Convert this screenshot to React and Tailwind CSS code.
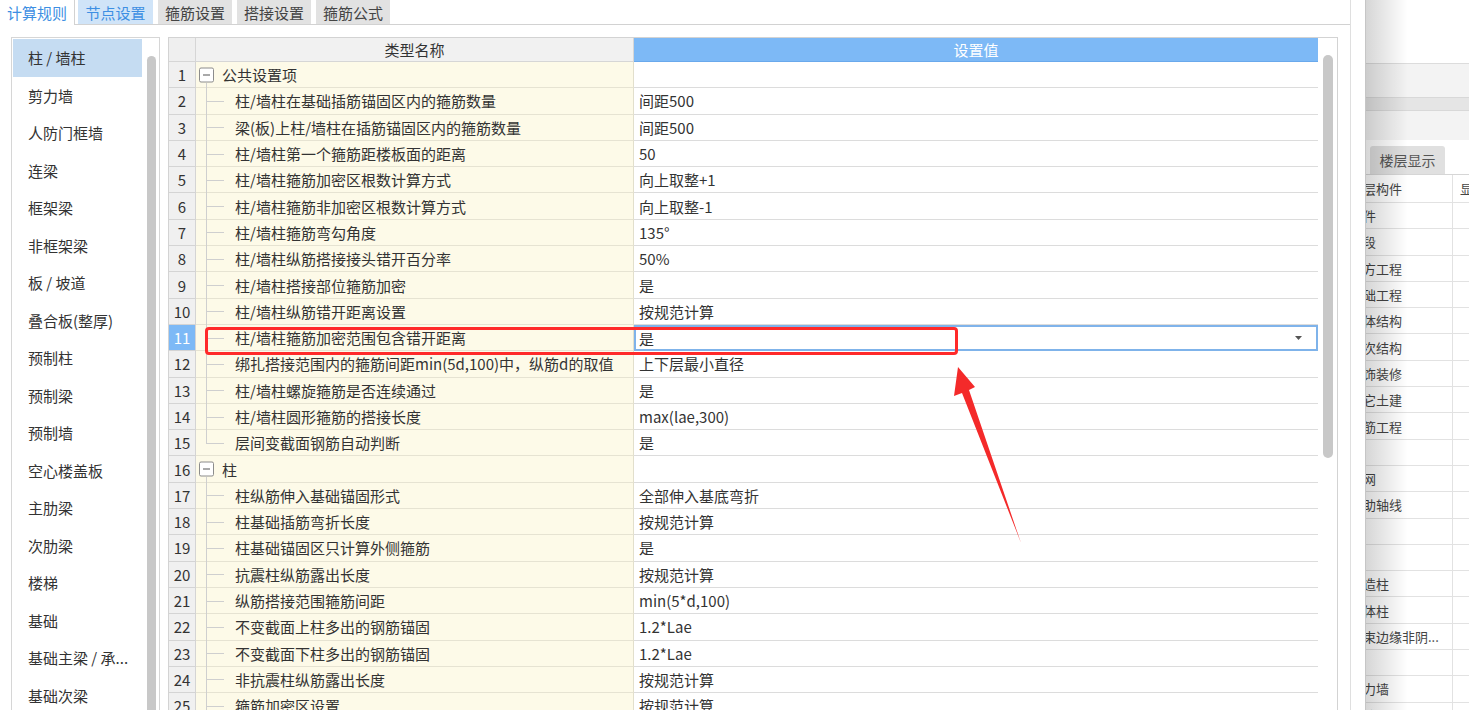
import React from "react";

const listItems = [
  "柱 / 墙柱", "剪力墙", "人防门框墙", "连梁", "框架梁", "非框架梁", "板 / 坡道", "叠合板(整厚)",
  "预制柱", "预制梁", "预制墙", "空心楼盖板", "主肋梁", "次肋梁", "楼梯", "基础", "基础主梁 / 承...", "基础次梁",
];

const rows = [
  { n: 1, name: "公共设置项", group: true, value: "" },
  { n: 2, name: "柱/墙柱在基础插筋锚固区内的箍筋数量", value: "间距500" },
  { n: 3, name: "梁(板)上柱/墙柱在插筋锚固区内的箍筋数量", value: "间距500" },
  { n: 4, name: "柱/墙柱第一个箍筋距楼板面的距离", value: "50" },
  { n: 5, name: "柱/墙柱箍筋加密区根数计算方式", value: "向上取整+1" },
  { n: 6, name: "柱/墙柱箍筋非加密区根数计算方式", value: "向上取整-1" },
  { n: 7, name: "柱/墙柱箍筋弯勾角度", value: "135°" },
  { n: 8, name: "柱/墙柱纵筋搭接接头错开百分率", value: "50%" },
  { n: 9, name: "柱/墙柱搭接部位箍筋加密", value: "是" },
  { n: 10, name: "柱/墙柱纵筋错开距离设置", value: "按规范计算" },
  { n: 11, name: "柱/墙柱箍筋加密范围包含错开距离", value: "是", selected: true },
  { n: 12, name: "绑扎搭接范围内的箍筋间距min(5d,100)中，纵筋d的取值", value: "上下层最小直径" },
  { n: 13, name: "柱/墙柱螺旋箍筋是否连续通过", value: "是" },
  { n: 14, name: "柱/墙柱圆形箍筋的搭接长度", value: "max(lae,300)" },
  { n: 15, name: "层间变截面钢筋自动判断", value: "是", last: true },
  { n: 16, name: "柱", group: true, value: "" },
  { n: 17, name: "柱纵筋伸入基础锚固形式", value: "全部伸入基底弯折" },
  { n: 18, name: "柱基础插筋弯折长度", value: "按规范计算" },
  { n: 19, name: "柱基础锚固区只计算外侧箍筋", value: "是" },
  { n: 20, name: "抗震柱纵筋露出长度", value: "按规范计算" },
  { n: 21, name: "纵筋搭接范围箍筋间距", value: "min(5*d,100)" },
  { n: 22, name: "不变截面上柱多出的钢筋锚固", value: "1.2*Lae" },
  { n: 23, name: "不变截面下柱多出的钢筋锚固", value: "1.2*Lae" },
  { n: 24, name: "非抗震柱纵筋露出长度", value: "按规范计算" },
  { n: 25, name: "箍筋加密区设置", value: "按规范计算" },
];

const rightRows = [
  "构件", "分段", "土方工程", "基础工程", "主体结构", "二次结构", "装饰装修", "其它土建", "钢筋工程", "",
  "轴网", "辅助轴线", "", "", "构造柱", "砌体柱", "约束边缘非阴...", "", "剪力墙", "人防门框墙",
];

function NameCell({ r }) {
  return (
    <div className="relative w-[438px] h-full shrink-0 border-r border-b border-r-[#e2dfcc] border-b-[#e6e3d2] bg-[#fdfae8] flex items-center whitespace-nowrap">
      {r.group ? (
        <>
          <div className="absolute left-[3px] top-1/2 -translate-y-1/2 w-[15px] h-[15px] border border-[#8c8c8c] bg-white rounded-[2px] flex items-center justify-center">
            <div className="w-[7px] h-px bg-[#555]" />
          </div>
          <div className="absolute left-[10px] top-[calc(50%+8px)] bottom-[-1px] w-px bg-[#cfcfcf]" />
          <span className="pl-[26px]">{r.name}</span>
        </>
      ) : (
        <>
          <div className={r.last ? "absolute left-[10px] top-[-1px] h-[14px] w-px bg-[#cfcfcf]" : "absolute left-[10px] top-[-1px] bottom-[-1px] w-px bg-[#cfcfcf]"} />
          <div className="absolute left-[10px] top-1/2 w-[18px] h-px bg-[#cfcfcf]" />
          <span className="pl-[39px]">{r.name}</span>
        </>
      )}
    </div>
  );
}

export default function App() {
  return (
    <div className="relative w-[1469px] h-[710px] overflow-hidden flex bg-white text-[#333] font-['Noto_Sans_CJK_SC','Noto_Sans',sans-serif]">
      {/* Dialog */}
      <div className="w-[1366px] h-full shrink-0 flex border-r border-[#c6c6c6] bg-white">
        <div className="w-[1350px] h-full flex flex-col">
          {/* Tabs */}
          <div className="h-[25px] flex shrink-0">
            <div className="w-[75px] h-full border-r border-[#d2d2d2] flex items-center pl-[7px] text-[15px] leading-none text-[#3d8fe3]">
              计算规则
            </div>
            <div className="flex-1 h-full border-b border-[#d2d2d2] flex items-end gap-[5px] pl-[3px]">
              <div className="w-[75px] h-[24px] bg-[#d0e4f8] flex items-center justify-center text-[15px] leading-none text-[#3d8fe3]">节点设置</div>
              <div className="w-[74px] h-[24px] bg-[#e2e2e2] flex items-center justify-center text-[15px] leading-none text-[#444]">箍筋设置</div>
              <div className="w-[74px] h-[24px] bg-[#e2e2e2] flex items-center justify-center text-[15px] leading-none text-[#444]">搭接设置</div>
              <div className="w-[74px] h-[24px] bg-[#e2e2e2] flex items-center justify-center text-[15px] leading-none text-[#444]">箍筋公式</div>
            </div>
          </div>

          {/* Body */}
          <div className="flex pl-[11px] pt-[12px] gap-[8px] flex-1 min-h-0">
            {/* Left list */}
            <div className="w-[149px] h-[700px] shrink-0 border border-[#d6d6d6] flex pt-px pl-px">
              <div className="w-[129px] flex flex-col">
                {listItems.map((t, i) => (
                  <div
                    key={t}
                    className={
                      i === 0
                        ? "h-[37.5px] shrink-0 flex items-center pl-[15px] text-[15px] leading-none whitespace-nowrap bg-[#c5dcf2]"
                        : "h-[37.5px] shrink-0 flex items-center pl-[15px] text-[15px] leading-none whitespace-nowrap"
                    }
                  >
                    {t}
                  </div>
                ))}
              </div>
              <div className="ml-[5px] mt-[17px] w-[9px] h-[700px] rounded-full bg-[#c8c8c8]" />
            </div>

            {/* Table */}
            <div className="w-[1170px] h-[700px] shrink-0 border border-[#d3d3d3] flex">
              <div className="w-[1149px] flex flex-col text-[15px] leading-none">
                {/* header */}
                <div className="h-[24px] flex shrink-0">
                  <div className="w-[27px] h-full shrink-0 bg-[#efefef] border-r border-b border-[#d6d6d6]" />
                  <div className="w-[438px] h-full shrink-0 bg-[#f1f1f1] border-r border-b border-[#d6d6d6] flex items-center justify-center">类型名称</div>
                  <div className="flex-1 h-full bg-[#7db9f6] border-b border-[#6aa9ec] flex items-center justify-center text-white">设置值</div>
                </div>
                {rows.map((r) => (
                  <div key={r.n} className="h-[26.3px] shrink-0 flex">
                    <div
                      className={
                        r.selected
                          ? "w-[27px] h-full shrink-0 bg-[#7db9f6] text-white border-r border-b border-[#d4d4d4] flex items-center justify-center"
                          : "w-[27px] h-full shrink-0 bg-[#f0f0f0] border-r border-b border-[#d4d4d4] flex items-center justify-center"
                      }
                    >
                      {r.n}
                    </div>
                    <NameCell r={r} />
                    {r.selected ? (
                      <div className="flex-1 h-full border-2 border-[#7fb3ea] bg-white flex items-center pl-[3px] pr-[14px]">
                        <span className="flex-1">{r.value}</span>
                        <svg width="7" height="4" viewBox="0 0 7 4">
                          <polygon points="0,0 7,0 3.5,4" fill="#555" />
                        </svg>
                      </div>
                    ) : (
                      <div className="flex-1 h-full border-b border-[#dcdcdc] bg-white flex items-center pl-[5px] whitespace-nowrap">
                        {r.value}
                      </div>
                    )}
                  </div>
                ))}
              </div>
              <div className="flex-1 flex justify-center">
                <div className="mt-[17px] w-[10px] h-[403px] rounded-full bg-[#c8c8c8]" />
              </div>
            </div>
          </div>
        </div>
        <div className="flex-1 h-full border-l border-[#dfdfdf]" />
      </div>

      {/* Right background panel */}
      <div className="relative flex-1 h-full overflow-hidden flex flex-col text-[13px] leading-none text-[#444]">
        <div className="h-[63px] shrink-0 bg-white" />
        <div className="h-[34px] shrink-0 bg-[#f3f3f3] border-t border-[#dcdcdc]" />
        <div className="h-[13px] shrink-0 bg-[#e5e5e5] border-t border-[#d8d8d8]" />
        <div className="h-[30px] shrink-0 bg-[#f3f3f3] border-t border-[#d8d8d8]" />
        <div className="h-[34px] shrink-0 bg-white flex items-end pl-[4px]">
          <div className="w-[75px] h-[28px] bg-[#e0e0e0] rounded-t-[3px] flex items-center justify-center text-[14px] text-[#555]">楼层显示</div>
        </div>
        <div className="flex-1 border-t border-[#d6d6d6] flex flex-col">
          <div className="h-[28px] shrink-0 flex border-b border-[#e2e2e2]">
            <div className="w-[87px] h-full shrink-0 border-r border-[#e2e2e2] flex items-center whitespace-nowrap">
              <span className="ml-[-16px]">楼层构件</span>
            </div>
            <div className="flex-1 flex items-center pl-[7px] whitespace-nowrap">显示</div>
          </div>
          {rightRows.map((t, i) => (
            <div key={i} className="h-[26.3px] shrink-0 flex border-b border-[#e2e2e2]">
              <div className="w-[87px] h-full shrink-0 border-r border-[#e2e2e2] flex items-center whitespace-nowrap">
                <span className="ml-[-16px]">{t}</span>
              </div>
              <div className="flex-1" />
            </div>
          ))}
        </div>
        <div className="absolute left-0 top-0 bottom-0 w-[42px] bg-linear-to-r from-[rgba(0,0,0,0.16)] to-transparent pointer-events-none" />
      </div>

      {/* Annotation: red rounded box */}
      <div className="absolute left-[205px] top-[327px] w-[753px] h-[28px] border-[3px] border-[#ff2a2a] rounded-[4px] pointer-events-none" />

      {/* Annotation: red arrow */}
      <svg className="absolute left-0 top-0 pointer-events-none" width="1469" height="710" viewBox="0 0 1469 710">
        <polygon points="958,367 975,387 969,390 1021,543 962,393 954,396" fill="#f42a2a" />
      </svg>
    </div>
  );
}
